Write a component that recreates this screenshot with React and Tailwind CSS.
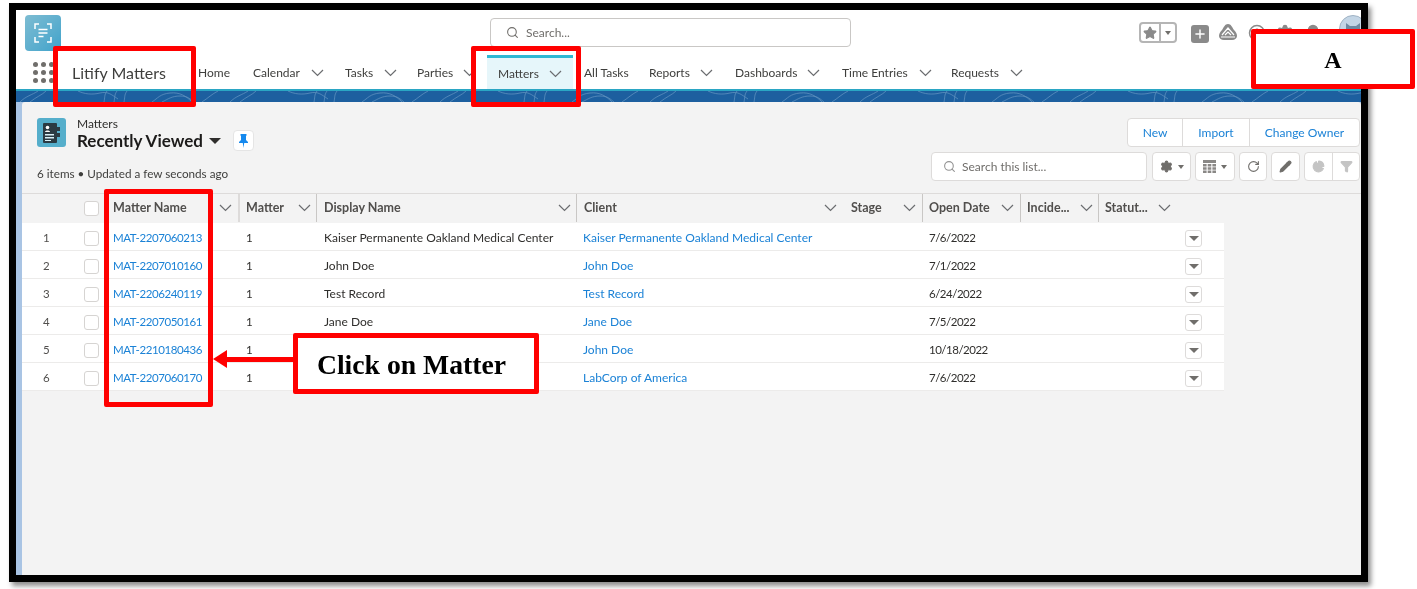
import React from "react";
import { Search, Star, Plus, RotateCw, Settings, Pencil, PieChart, Filter, CircleHelp, Bell } from "lucide-react";

const navItems = [
  { label: "Home", w: "w-[55px]" },
  { label: "Calendar", w: "w-[92px]", chev: "ml-[11px]" },
  { label: "Tasks", w: "w-[72px]", chev: "ml-[11px]" },
  { label: "Parties", w: "w-[70px]", chev: "ml-[10px]" },
];
const navAfter = [
  { label: "Reports", w: "w-[86px]", chev: "ml-[10px]" },
  { label: "Dashboards", w: "w-[107px]", chev: "ml-[10px]" },
  { label: "Time Entries", w: "w-[109px]", chev: "ml-[11px]" },
  { label: "Requests", w: "w-[90px]", chev: "ml-[11px]" },
];

// display name is empty on the last two rows: the callout box covers it in the picture
const rows = [
  ["MAT-2207060213", "Kaiser Permanente Oakland Medical Center", "Kaiser Permanente Oakland Medical Center", "7/6/2022"],
  ["MAT-2207010160", "John Doe", "John Doe", "7/1/2022"],
  ["MAT-2206240119", "Test Record", "Test Record", "6/24/2022"],
  ["MAT-2207050161", "Jane Doe", "Jane Doe", "7/5/2022"],
  ["MAT-2210180436", "", "John Doe", "10/18/2022"],
  ["MAT-2207060170", "", "LabCorp of America", "7/6/2022"],
];

const gridCols = "grid grid-cols-[54px_28px_134px_78px_260px_267px_79px_98px_78px_78px_48px]";

const headers = [
  { label: "Matter Name", cls: "pl-[9px] pr-[6px]" },
  { label: "Matter", cls: "pl-[6px] pr-[5px] border-l-2 border-[#dddbda]" },
  { label: "Display Name", cls: "pl-[7px] pr-[5px] border-l border-[#c9c7c5]" },
  { label: "Client", cls: "pl-[7px] pr-[6px] border-l border-[#c9c7c5]" },
  { label: "Stage", cls: "pl-[8px] pr-[6px]" },
  { label: "Open Date", cls: "pl-[6px] pr-[6px] border-l border-[#c9c7c5]" },
  { label: "Incide...", cls: "pl-[6px] pr-[5px] border-l border-[#c9c7c5]" },
  { label: "Statut...", cls: "pl-[6px] pr-[5px] border-l border-[#c9c7c5]" },
];

function Chev({ className = "" }) {
  return (
    <svg className={`shrink-0 ${className}`} width="13" height="8" viewBox="0 0 13 8" fill="none" stroke="#6b6d70" strokeWidth="1.2">
      <path d="M1 1l5.5 5.5L12 1" />
    </svg>
  );
}

function ToolBtn({ className = "", children }) {
  return (
    <div className={`h-[29px] flex items-center justify-center bg-white border border-[#dddbda] rounded ${className}`}>
      {children}
    </div>
  );
}

function Caret({ className = "" }) {
  return <span className={`w-0 h-0 border-x-[3px] border-x-transparent border-t-[4px] border-t-[#706e6b] ${className}`} />;
}

function LogoIcon() {
  return (
    <div className="w-[36px] h-[36px] shrink-0 rounded-[4px] bg-gradient-to-br from-[#7dbcd2] to-[#3ea3cb] flex items-center justify-center">
      <svg width="18" height="20" viewBox="0 0 18 20" fill="none" stroke="#fff" strokeWidth="1.5">
        <path d="M5 1H1v5M13 1h4v5M5 19H1v-5M13 19h4v-5" />
        <path d="M4.5 6.5h9M4.5 10h9M4.5 13.5h5" strokeWidth="1.6" />
      </svg>
    </div>
  );
}

function MatterIcon() {
  return (
    <div className="w-[29px] h-[29px] rounded-[3px] bg-[#55aecb] flex items-center justify-center">
      <svg width="19" height="22" viewBox="0 0 19 22">
        <rect x="1" y="1" width="14" height="20" rx="1" fill="#2b3a42" />
        <path d="M15 5h3v4h-3zM15 11h3v4h-3z" fill="#2b3a42" />
        <circle cx="5.5" cy="5.5" r="1.8" fill="#fff" />
        <path d="M3 10c0-2 5-2 5 0z" fill="#fff" />
        <path d="M3 12h9v1.5H3zM3 15h9v1.5H3zM3 18h6v1H3z" fill="#d9f0f7" />
      </svg>
    </div>
  );
}

function Band() {
  return (
    <div className="h-[11px] bg-[#1d5f9f] overflow-hidden">
      <svg width="1345" height="11">
        <defs>
          <pattern id="topo" width="210" height="11" patternUnits="userSpaceOnUse">
            <path
              d="M4 11C10 5 16 4 22 0M14 11C20 6 26 4 30 0M62 0c6 3 14 4 22 2s12 2 18 6M88 11c1-4 0-7 3-11M98 11c1-4 0-7 3-11M108 11c1-4 0-7 3-11M136 11c6-4 8-8 18-9s16 3 22 9M146 11c6-3 10-6 18-6s10 3 14 6M186 11c6-4 10-8 16-11"
              fill="none"
              stroke="#5d8fbe"
              strokeWidth="0.8"
            />
          </pattern>
        </defs>
        <rect width="1345" height="11" fill="url(#topo)" />
      </svg>
    </div>
  );
}

function NavItem({ item }) {
  return (
    <div className={`${item.w} h-full flex items-center shrink-0`}>
      <span>{item.label}</span>
      {item.chev && <Chev className={item.chev} />}
    </div>
  );
}

export default function App() {
  return (
    <div className="relative w-[1417px] h-[589px] overflow-hidden bg-white font-['Lato',sans-serif] text-[12px] text-[#2f2e2c] [filter:blur(0.4px)]">
      <div className="ml-[9px] mt-[3px] w-[1359px] h-[579px] border-[7px] border-black shadow-[3px_4px_5px_rgba(0,0,0,0.45)] overflow-hidden flex flex-col bg-white">
        {/* top bar */}
        <div className="h-[45px] shrink-0 flex pl-[9px] pt-[5px]">
          <LogoIcon />
          <div className="ml-[429px] mt-[3px] w-[361px] h-[29px] shrink-0 border border-[#c9c7c5] rounded flex items-center pl-[15px] text-[#706e6b]">
            <Search className="w-[13px] h-[13px]" strokeWidth={2} />
            <span className="ml-[7px] pt-px">Search...</span>
          </div>
          <div className="ml-[288px] mt-[7px] w-[38px] h-[21px] shrink-0 border-2 border-[#b5b5b5] rounded flex">
            <div className="w-[20px] flex items-center justify-center border-r-2 border-[#b5b5b5]">
              <Star className="w-[14px] h-[14px] text-[#8a8a8a] fill-[#8a8a8a]" />
            </div>
            <div className="flex-1 flex items-center justify-center">
              <Caret className="border-t-[#8a8a8a]" />
            </div>
          </div>
          <div className="ml-[14px] mt-[10px] w-[18px] h-[18px] shrink-0 rounded-[3px] bg-[#8a8a8a] flex items-center justify-center">
            <Plus className="w-[14px] h-[14px] text-white" strokeWidth={2.5} />
          </div>
          <svg className="ml-[10px] mt-[9px] shrink-0" width="18" height="17" viewBox="0 0 18 17">
            <path d="M9 0c3 0 4 3 6 6 2 2 3 4 3 6s-2 4-5 4H5c-3 0-5-2-5-4s1-4 3-6c2-3 3-6 6-6z" fill="#8a8a8a" />
            <path d="M3 11l6-7 6 7M6 11l3-3 3 3M2 13h14" fill="none" stroke="#fff" strokeWidth="1.2" />
          </svg>
          <CircleHelp className="ml-[11px] mt-[9px] w-[18px] h-[18px] shrink-0 text-[#8a8a8a]" />
          <Settings className="ml-[10px] mt-[9px] w-[18px] h-[18px] shrink-0 text-[#8a8a8a] fill-[#8a8a8a]" />
          <Bell className="ml-[10px] mt-[9px] w-[18px] h-[18px] shrink-0 text-[#8a8a8a] fill-[#8a8a8a]" />
          <div className="ml-[17px] w-[28px] h-[28px] rounded-full bg-[#c4d6e6] border border-[#9fb2c4] shrink-0 overflow-hidden flex items-center justify-center">
            <svg width="20" height="16" viewBox="0 0 20 16" fill="#6f8ba3">
              <path d="M3 2l4 3h6l4-3v8c0 3-3 5-7 5s-7-2-7-5z" />
            </svg>
          </div>
        </div>

        {/* nav */}
        <div className="h-[34px] shrink-0 flex text-[#3e3e3c] pt-[2px]">
          <div className="w-[182px] shrink-0 -mt-[2px] flex items-center pl-[17px]">
            <div className="grid grid-cols-3 gap-[3px]">
              {Array.from({ length: 9 }).map((_, i) => (
                <span key={i} className="w-[5px] h-[5px] rounded-full bg-[#706e6b]" />
              ))}
            </div>
            <span className="ml-[18px] pt-[1px] text-[16px] whitespace-nowrap">Litify Matters</span>
          </div>
          {navItems.map((item) => (
            <NavItem key={item.label} item={item} />
          ))}
          <div className="w-[86px] shrink-0 -mt-[2px] border-t-[3px] border-[#2fb8d3] bg-[#e6f6fa] flex items-center pl-[11px]">
            <span>Matters</span>
            <Chev className="ml-[10px]" />
          </div>
          <div className="w-[76px] shrink-0 flex items-center pl-[11px]">All Tasks</div>
          {navAfter.map((item) => (
            <NavItem key={item.label} item={item} />
          ))}
        </div>

        <div className="h-[2px] shrink-0 bg-[#2aa6c4]" />
        <Band />

        {/* list view */}
        <div className="flex-1 flex bg-[#a9c4e4]">
          <div className="ml-[6px] flex-1 bg-[#f3f3f3] rounded-t-[3px]">
            <div className="h-[91px] flex justify-between pl-[15px] pt-[16px]">
              <div>
                <div className="flex h-[33px]">
                  <MatterIcon />
                  <div className="ml-[11px]">
                    <div className="text-[12px] leading-[12px]">Matters</div>
                    <div className="flex items-center">
                      <span className="text-[17px] leading-[22px] font-bold text-[#1c1b1a]">Recently Viewed</span>
                      <span className="ml-[6px] w-0 h-0 border-x-[6px] border-x-transparent border-t-[6px] border-t-[#2f2e2c]" />
                    </div>
                  </div>
                  <div className="ml-[12px] mt-[12px] w-[21px] h-[21px] bg-white border border-[#e5e5e5] rounded flex items-center justify-center">
                    <svg width="9" height="14" viewBox="0 0 9 14" fill="#1589ee">
                      <path d="M1.5 0h6v1.5L7 2v4l2 2v1H5.2L4.5 14 3.8 9H0V8l2-2V2l-.5-.5z" />
                    </svg>
                  </div>
                </div>
                <div className="mt-[15px] text-[11.7px] leading-[14px] text-[#3e3e3c]">6 items • Updated a few seconds ago</div>
              </div>

              <div className="flex flex-col items-end gap-[5px] pr-px">
                <div className="flex h-[29px] bg-white border border-[#dddbda] rounded text-[#1b82d6]">
                  <div className="w-[55px] pt-px flex items-center justify-center border-r border-[#dddbda]">New</div>
                  <div className="w-[67px] pt-px flex items-center justify-center border-r border-[#dddbda]">Import</div>
                  <div className="w-[109px] pt-px flex items-center justify-center">Change Owner</div>
                </div>
                <div className="flex gap-[4px]">
                  <ToolBtn className="w-[216px] mr-px !justify-start pl-[11px] text-[#706e6b]">
                    <Search className="w-[13px] h-[13px] text-[#939393]" />
                    <span className="ml-[6px] pt-px">Search this list...</span>
                  </ToolBtn>
                  <ToolBtn className="w-[39px] gap-[5px]">
                    <Settings className="w-[13px] h-[13px] text-[#706e6b] fill-[#706e6b]" />
                    <Caret />
                  </ToolBtn>
                  <ToolBtn className="w-[40px] gap-[5px]">
                    <svg width="13" height="13" viewBox="0 0 13 13" fill="#8a8886">
                      <path d="M0 0h13v3H0zM0 4h3.6v2.5H0zM4.7 4h3.6v2.5H4.7zM9.4 4H13v2.5H9.4zM0 7.2h3.6v2.5H0zM4.7 7.2h3.6v2.5H4.7zM9.4 7.2H13v2.5H9.4zM0 10.4h3.6V13H0zM4.7 10.4h3.6V13H4.7zM9.4 10.4H13V13H9.4z" />
                    </svg>
                    <Caret />
                  </ToolBtn>
                  <ToolBtn className="w-[28px]">
                    <RotateCw className="w-[13px] h-[13px] text-[#706e6b]" />
                  </ToolBtn>
                  <ToolBtn className="w-[29px]">
                    <Pencil className="w-[13px] h-[13px] text-[#706e6b] fill-[#706e6b]" />
                  </ToolBtn>
                  <div className="flex h-[29px] w-[56px] bg-white border border-[#dddbda] rounded">
                    <div className="w-[28px] flex items-center justify-center border-r border-[#dddbda]">
                      <PieChart className="w-[13px] h-[13px] text-[#c4c4c4] fill-[#c4c4c4]" />
                    </div>
                    <div className="flex-1 flex items-center justify-center">
                      <Filter className="w-[13px] h-[13px] text-[#c4c4c4] fill-[#c4c4c4]" />
                    </div>
                  </div>
                </div>
              </div>
            </div>

            {/* table */}
            <div className={`${gridCols} h-[30px] border-t border-[#dddbda] font-bold text-[12.5px] text-[#514f4d] pb-px`}>
              <div />
              <div className="flex items-center pl-[8px]">
                <span className="w-[15px] h-[15px] bg-white border border-[#d6d4d2] rounded-[3px]" />
              </div>
              {headers.map((h) => (
                <div key={h.label} className={`flex items-center justify-between ${h.cls}`}>
                  <span className="whitespace-nowrap">{h.label}</span>
                  <Chev />
                </div>
              ))}
            </div>
            <div className="w-[1202px] bg-white">
              {rows.map((r, i) => (
                <div key={r[0]} className={`${gridCols} h-[28px] border-b border-[#ecebea] items-center pt-[3px]`}>
                  <div className="pl-[21px] text-[11.5px] text-[#514f4d]">{i + 1}</div>
                  <div className="pl-[8px] flex">
                    <span className="w-[15px] h-[15px] bg-white border border-[#d6d4d2] rounded-[3px]" />
                  </div>
                  <div className="pl-[9px] text-[11.5px] tracking-[-0.4px] text-[#1b82d6] whitespace-nowrap">{r[0]}</div>
                  <div className="pl-[8px] text-[11.5px]">1</div>
                  <div className="pl-[8px] whitespace-nowrap">{r[1]}</div>
                  <div className="pl-[7px] text-[#1b82d6] whitespace-nowrap">{r[2]}</div>
                  <div />
                  <div className="pl-[7px] text-[11.5px] tracking-[-0.5px]">{r[3]}</div>
                  <div />
                  <div />
                  <div className="pl-[9px]">
                    <div className="w-[17px] h-[17px] bg-white border border-[#dddbda] rounded-[3px] flex items-center justify-center">
                      <span className="w-0 h-0 border-x-[5px] border-x-transparent border-t-[5px] border-t-[#706e6b]" />
                    </div>
                  </div>
                </div>
              ))}
            </div>
          </div>
        </div>
      </div>

      {/* annotations over the screenshot */}
      <div className="absolute left-[53px] top-[46px] w-[143px] h-[61px] border-[5px] border-[#ff0000] rounded-[2px]" />
      <div className="absolute left-[471px] top-[46px] w-[110px] h-[61px] border-[5px] border-[#ff0000] rounded-[2px]" />
      <div className="absolute left-[104px] top-[189px] w-[109px] h-[218px] border-[5px] border-[#ff0000] rounded-[2px]" />
      <div className="absolute left-[1251px] top-[29px] w-[164px] h-[60px] border-[5px] border-[#ff0000] rounded-[2px] bg-white flex items-center justify-center pt-px font-['Liberation_Serif',serif] font-bold text-[24px] text-black">
        A
      </div>
      <div className="absolute left-[293px] top-[333px] w-[246px] h-[61px] border-[5px] border-[#ff0000] rounded-[2px] bg-white flex items-center justify-center pr-[9px] pt-[3px] font-['Liberation_Serif',serif] font-bold text-[27.7px] text-black whitespace-nowrap">
        Click on Matter
      </div>
      <div className="absolute left-[213px] top-[350px] flex items-center">
        <span className="w-0 h-0 border-y-[9px] border-y-transparent border-r-[14px] border-r-[#ff0000]" />
        <span className="w-[66px] h-[5px] bg-[#ff0000]" />
      </div>
    </div>
  );
}
